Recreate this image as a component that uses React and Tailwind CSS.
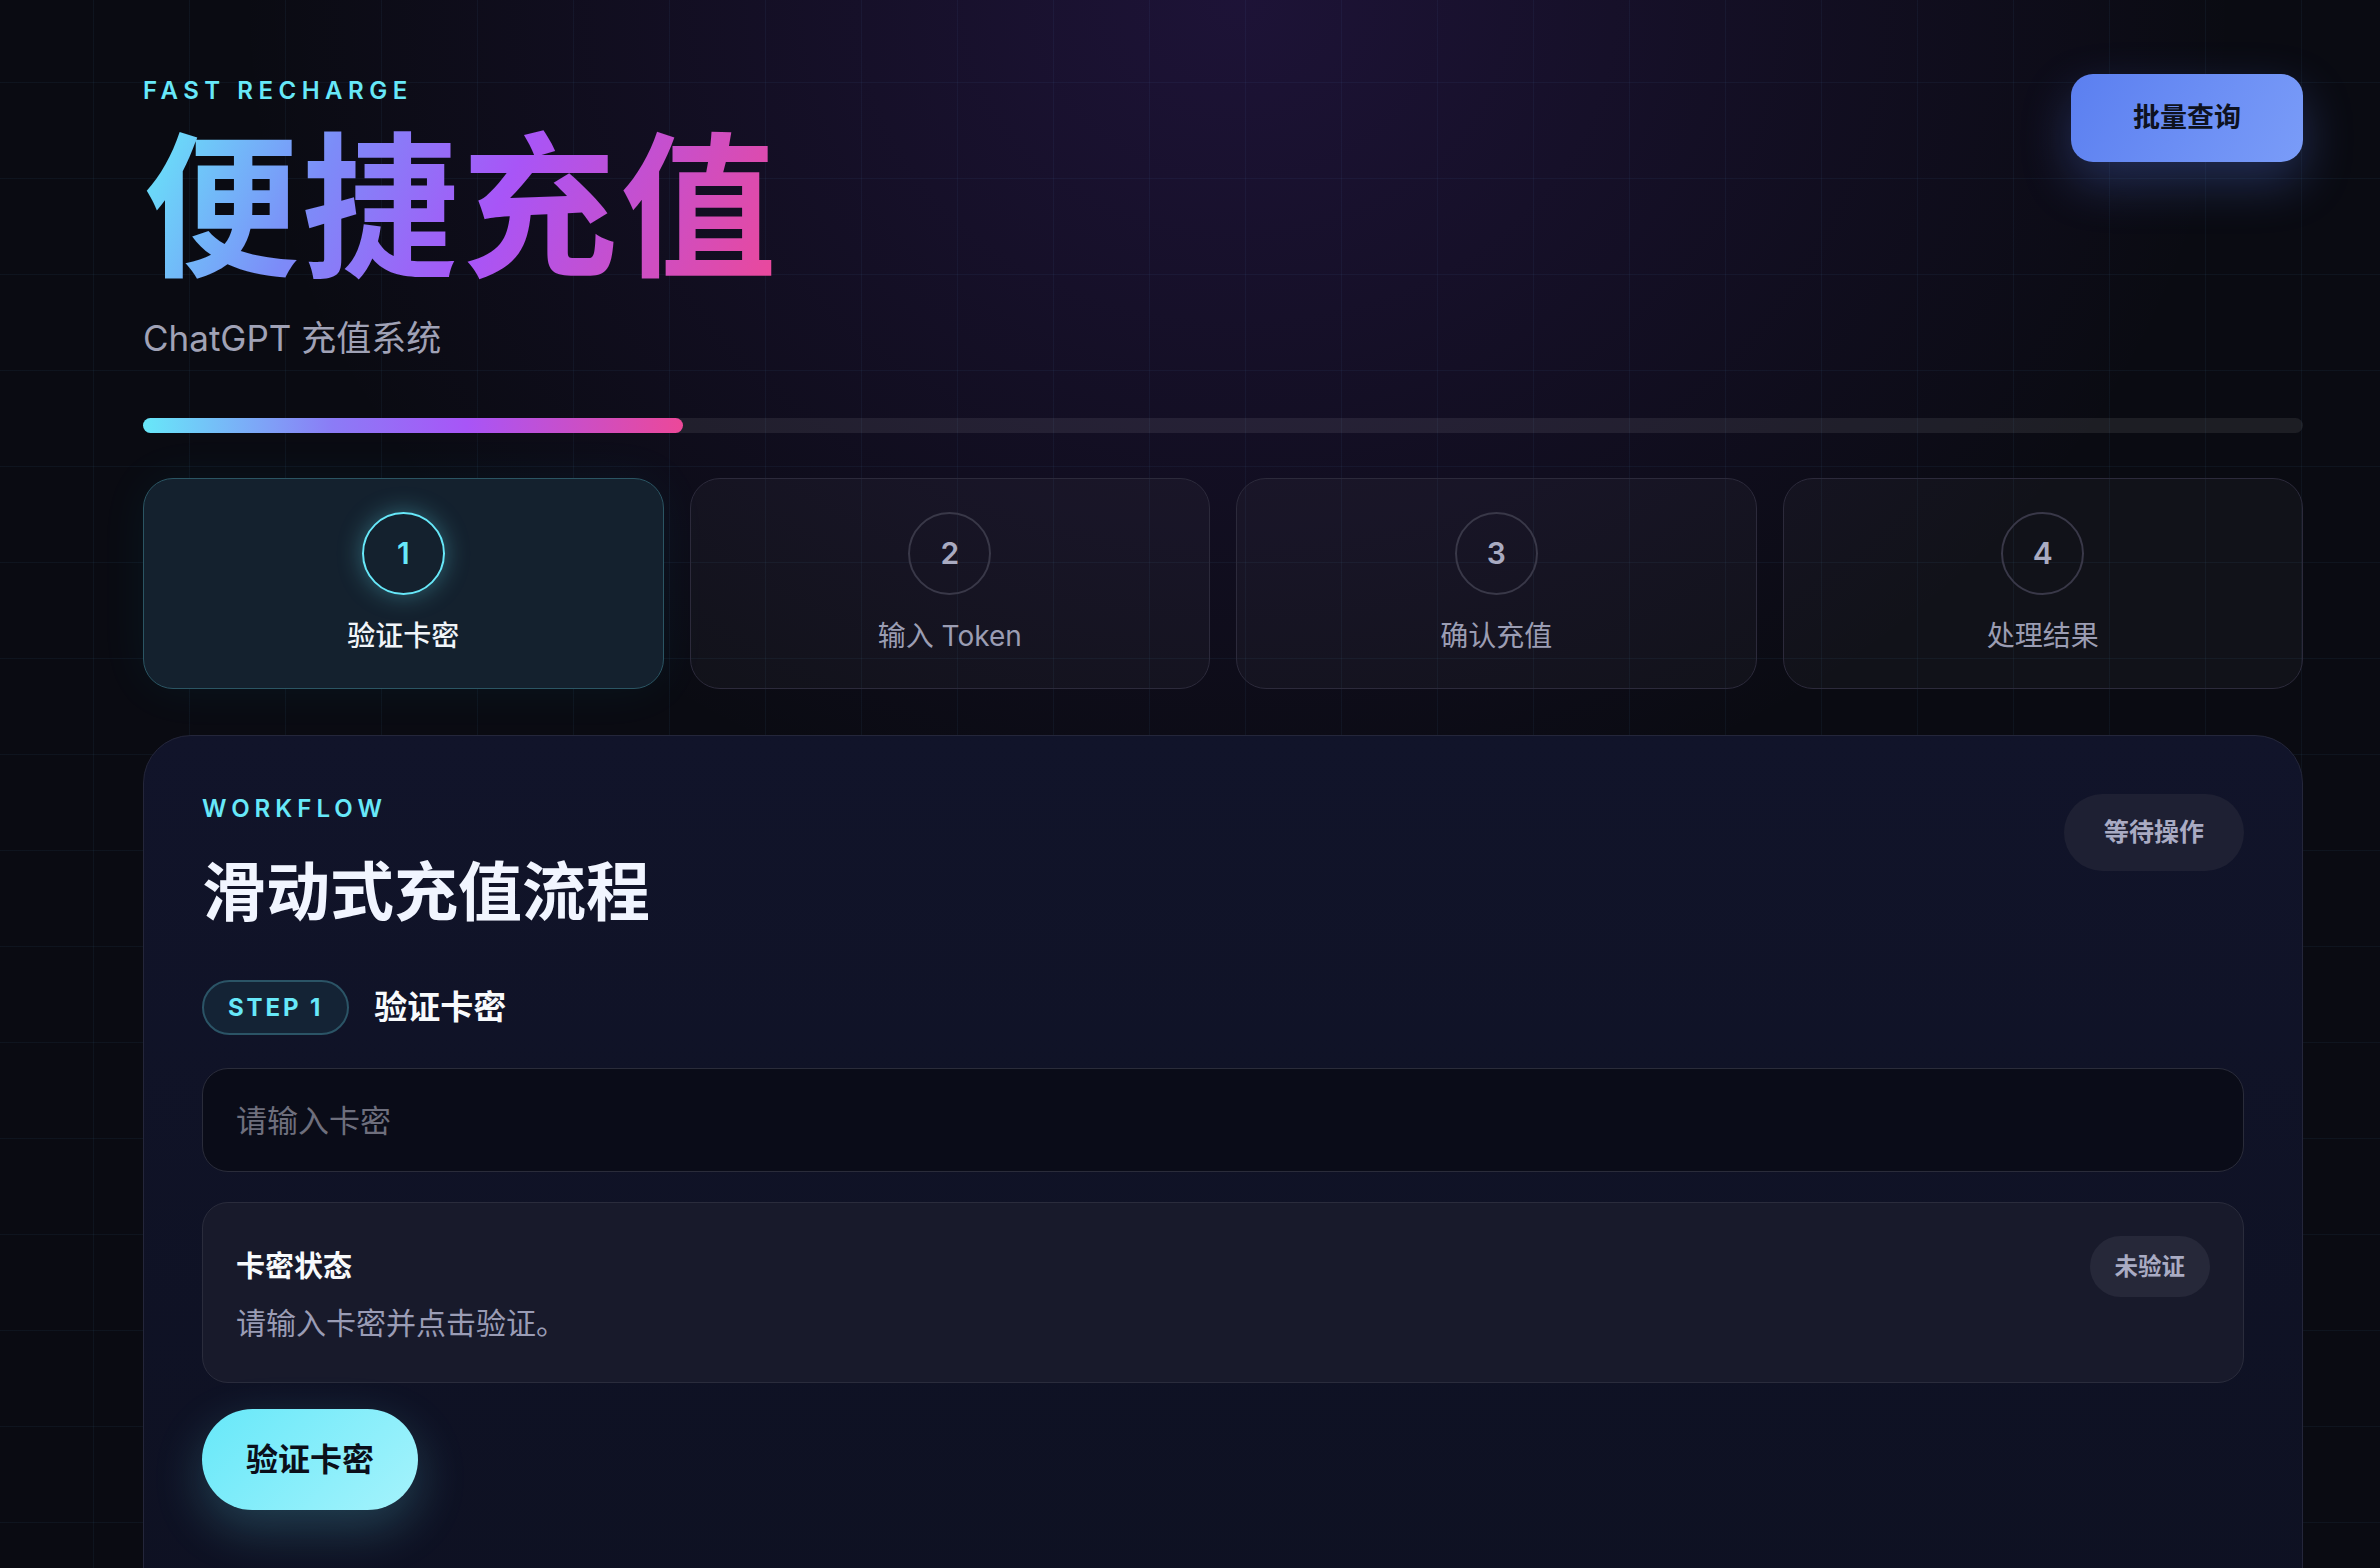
import React from 'react';

const steps = [
  { n: 1, label: '验证卡密' },
  { n: 2, label: '输入 Token' },
  { n: 3, label: '确认充值' },
  { n: 4, label: '处理结果' },
];

const StepCard = ({ n, label, active }) => (
  <div
    className={
      active
        ? 'flex h-[211px] flex-col items-center rounded-[30px] border border-[#2b5563] bg-[#14212e] pt-[33px] shadow-[0_0_50px_rgba(34,211,238,0.06)]'
        : 'flex h-[211px] flex-col items-center rounded-[30px] border border-[#2c2a3b] bg-white/[0.03] pt-[33px]'
    }
  >
    <div
      className={
        active
          ? 'flex h-[83px] w-[83px] items-center justify-center rounded-full border-2 border-[#67e8f9] text-[30px] font-semibold text-[#67e8f9] shadow-[0_0_24px_rgba(103,232,249,0.35)]'
          : 'flex h-[83px] w-[83px] items-center justify-center rounded-full border-2 border-[#393848] text-[30px] font-semibold text-[#a9abc1]'
      }
    >
      {n}
    </div>
    <div
      className={
        active
          ? 'mt-[21px] text-[28px] leading-[40px] font-medium text-[#f1f5f9]'
          : 'mt-[21px] text-[28px] leading-[40px] text-[#9b9db3]'
      }
    >
      {label}
    </div>
  </div>
);

export default function App() {
  return (
    <div className="min-h-screen bg-[#0a0b12] bg-[linear-gradient(rgba(100,180,230,0.06)_1px,transparent_1px),linear-gradient(90deg,rgba(100,180,230,0.06)_1px,transparent_1px)] bg-[size:96px_96px] bg-[position:93px_82px] font-['Inter','Noto_Sans_CJK_SC',sans-serif]">
      <div className="min-h-screen bg-[radial-gradient(ellipse_1000px_850px_at_52%_0%,rgba(124,58,237,0.17),transparent_100%)]">
        <div className="pl-[143px] pr-[77px] pt-[74px] pb-0">
          {/* header */}
          <div className="flex items-start justify-between">
            <div className="pt-[5px]">
              <div className="text-[24px] leading-[24px] font-semibold tracking-[0.23em] text-[#67e8f9]">
                FAST RECHARGE
              </div>
              <h1 className="mt-[27px] inline-block bg-[linear-gradient(115deg,#67e8f9_0%,#7c8cf8_28%,#a855f7_55%,#ec4899_100%)] bg-clip-text text-[156px] leading-none font-bold tracking-[0.02em] text-transparent">
                便捷充值
              </h1>
              <p className="mt-[30px] text-[35px] leading-[44px] text-[#a0a2b6]">ChatGPT 充值系统</p>
            </div>
            <button className="h-[88px] w-[232px] rounded-[22px] bg-[linear-gradient(120deg,#5b7ff0,#7a9cf8)] text-[27px] font-bold text-[#0e1220] shadow-[0_20px_50px_rgba(91,127,240,0.3)]">
              批量查询
            </button>
          </div>

          {/* progress */}
          <div className="mt-[58px] h-[15px] w-full rounded-full bg-white/[0.08]">
            <div className="h-full w-1/4 rounded-full bg-[linear-gradient(90deg,#67e8f9,#8b7cf6_35%,#a855f7_60%,#ec4899)]" />
          </div>

          {/* steps */}
          <div className="mt-[45px] grid grid-cols-4 gap-[26px]">
            {steps.map((s) => (
              <StepCard key={s.n} n={s.n} label={s.label} active={s.n === 1} />
            ))}
          </div>

          {/* main card */}
          <div className="mt-[46px] rounded-[48px] border border-[#24263a] bg-[linear-gradient(180deg,#11142a,#0e1122)] px-[58px] pt-[61px] pb-[120px]">
            <div className="flex items-start justify-between">
              <div>
                <div className="text-[24px] leading-[24px] font-semibold tracking-[0.21em] text-[#67e8f9]">WORKFLOW</div>
                <h2 className="mt-[33px] text-[64px] leading-[76px] font-bold text-[#f1f5ff]">滑动式充值流程</h2>
              </div>
              <div className="-mt-[3px] flex h-[77px] items-center rounded-full bg-[#1e2033] px-[40px] text-[25px] font-bold text-[#a9abc3]">
                等待操作
              </div>
            </div>

            <div className="mt-[50px] flex items-center gap-[25px]">
              <span className="flex h-[55px] items-center rounded-full border-2 border-[#2b5466] bg-[#142335] px-[24px] text-[24px] font-bold tracking-[0.12em] text-[#67e8f9]">
                STEP 1
              </span>
              <span className="text-[33px] font-bold text-[#f8fafc]">验证卡密</span>
            </div>

            <input
              className="mt-[33px] block h-[104px] w-full rounded-[26px] border border-[#2a2c3a] bg-[#0a0c18] px-[33px] text-[31px] text-[#e5e7eb] outline-none placeholder:text-[#6e6f7d]"
              placeholder="请输入卡密"
            />

            <div className="mt-[30px] rounded-[26px] border border-[#2a2c3c] bg-[#181a2b] p-[33px]">
              <div className="flex items-center justify-between">
                <span className="text-[29px] font-bold text-[#f8fafc]">卡密状态</span>
                <span className="flex h-[61px] items-center rounded-full bg-[#262839] px-[25px] text-[23.5px] font-bold text-[#a9abc3]">
                  未验证
                </span>
              </div>
              <p className="text-[30px] leading-[52px] text-[#9a9cb5]">请输入卡密并点击验证。</p>
            </div>

            <button className="mt-[26px] h-[101px] rounded-full bg-[linear-gradient(135deg,#67e8f9,#a5f3fc)] px-[44px] text-[32px] font-bold text-[#0b0f1a] shadow-[0_18px_50px_rgba(103,232,249,0.22)]">
              验证卡密
            </button>
          </div>
        </div>
      </div>
    </div>
  );
}
